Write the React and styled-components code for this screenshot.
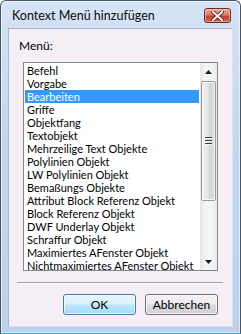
import React from 'react';
import styled, { createGlobalStyle } from 'styled-components';

const GlobalStyle = createGlobalStyle`
  html, body {
    margin: 0;
    padding: 0;
    background: #ffffff;
  }
  body {
    font-family: Lato, 'Noto Sans', sans-serif;
    font-size: 12px;
    color: #000;
  }
`;

const items = [
  'Befehl',
  'Vorgabe',
  'Bearbeiten',
  'Griffe',
  'Objektfang',
  'Textobjekt',
  'Mehrzeilige Text Objekte',
  'Polylinien Objekt',
  'LW Polylinien Objekt',
  'Bemaßungs Objekte',
  'Attribut Block Referenz Objekt',
  'Block Referenz Objekt',
  'DWF Underlay Objekt',
  'Schraffur Objekt',
  'Maximiertes AFenster Objekt',
  'Nichtmaximiertes AFenster Obiekt',
];

export default function App() {
  return (
    <>
      <GlobalStyle />
      <Window>
        <TitleBar>
          <Title>Kontext Menü hinzufügen</Title>
          <CloseButton aria-label="Schließen">
            <svg width="13" height="10" viewBox="0 0 13 10">
              <path
                d="M2 1 L11 9 M11 1 L2 9"
                stroke="#5a1c12"
                strokeWidth="3.6"
                strokeLinecap="square"
              />
              <path
                d="M2 1 L11 9 M11 1 L2 9"
                stroke="#ffffff"
                strokeWidth="2"
                strokeLinecap="square"
              />
            </svg>
          </CloseButton>
        </TitleBar>
        <Client>
          <Label>Menü:</Label>
          <ListBox>
            <Items>
              {items.map((item) => (
                <Item key={item} selected={item === 'Bearbeiten'}>
                  {item}
                </Item>
              ))}
            </Items>
            <ScrollBar>
              <ArrowButton>
                <svg width="7" height="4" viewBox="0 0 7 4">
                  <path d="M0 4 L3.5 0 L7 4 Z" fill="#1e1e1e" />
                </svg>
              </ArrowButton>
              <Track>
                <Thumb>
                  <Grip>
                    <span />
                    <span />
                    <span />
                  </Grip>
                </Thumb>
              </Track>
              <ArrowButton>
                <svg width="7" height="4" viewBox="0 0 7 4">
                  <path d="M0 0 L7 0 L3.5 4 Z" fill="#1e1e1e" />
                </svg>
              </ArrowButton>
            </ScrollBar>
          </ListBox>
          <Separator />
          <ButtonRow>
            <PushButton primary>OK</PushButton>
            <PushButton>Abbrechen</PushButton>
          </ButtonRow>
        </Client>
      </Window>
    </>
  );
}

const Window = styled.div`
  width: 241px;
  height: 334px;
  box-sizing: border-box;
  border: 1px solid #4a5566;
  border-bottom-color: #3aa0c8;
  border-radius: 6px 6px 0 0;
  background: linear-gradient(180deg, #d5e4f5 0%, #c3d7ef 40%, #bcd2ec 100%);
  box-shadow: inset 0 0 0 1px rgba(255, 255, 255, 0.55);
  padding: 0 7px 6px 7px;
  display: flex;
  flex-direction: column;
`;

const TitleBar = styled.div`
  height: 27px;
  display: flex;
  align-items: center;
  justify-content: space-between;
  padding: 0 2px 0 4px;
`;

const Title = styled.span`
  font-size: 12.5px;
  color: #0b0b0b;
  margin-top: 1px;
`;

const CloseButton = styled.div`
  width: 27px;
  height: 15px;
  box-sizing: border-box;
  border: 1px solid #6b2b22;
  border-radius: 3px;
  background: linear-gradient(180deg, #e7a99a 0%, #d9816a 45%, #c2432a 55%, #d0684d 100%);
  box-shadow: inset 0 0 0 1px rgba(255, 220, 210, 0.5);
  display: flex;
  align-items: center;
  justify-content: center;
  margin-top: 2px;
`;

const Client = styled.div`
  flex: 1;
  background: #f5eff5;
  border: 1px solid #a5b6cb;
  border-right-color: #d8e4f2;
  border-bottom-color: #d8e4f2;
  display: flex;
  flex-direction: column;
  padding: 0 9px 0 8px;
`;

const Label = styled.div`
  font-size: 12px;
  margin: 8px 0 0 2px;
  height: 17px;
  line-height: 17px;
`;

const ListBox = styled.div`
  margin: 8px 5px 0 6px;
  height: 209px;
  box-sizing: border-box;
  border: 1px solid #828790;
  background: #ffffff;
  display: flex;
  overflow: hidden;
`;

const Items = styled.div`
  flex: 1;
  padding: 1px 1px 0 1px;
  overflow: hidden;
`;

const Item = styled.div`
  height: 13px;
  line-height: 13px;
  padding-left: 2px;
  font-size: 11px;
  white-space: nowrap;
  overflow: hidden;
  color: ${(p) => (p.selected ? '#ffffff' : '#000000')};
  background: ${(p) => (p.selected ? '#3399ff' : 'transparent')};
`;

const ScrollBar = styled.div`
  width: 17px;
  display: flex;
  flex-direction: column;
  background: linear-gradient(90deg, #e6e6e6 0%, #f4f4f4 30%, #f4f4f4 70%, #e9e9e9 100%);
`;

const ArrowButton = styled.div`
  height: 17px;
  display: flex;
  align-items: center;
  justify-content: center;
`;

const Track = styled.div`
  flex: 1;
  padding: 1px 0 0 1px;
`;

const Thumb = styled.div`
  width: 15px;
  height: 120px;
  box-sizing: border-box;
  border: 1px solid #9a9a9a;
  border-radius: 2px;
  background: linear-gradient(90deg, #f2f2f2 0%, #e6e6e6 45%, #d6d6d6 55%, #dcdcdc 100%);
  box-shadow: inset 0 0 0 1px rgba(255, 255, 255, 0.7);
  display: flex;
  align-items: center;
  justify-content: center;
`;

const Grip = styled.div`
  display: flex;
  flex-direction: column;
  gap: 1px;

  span {
    display: block;
    width: 7px;
    height: 1px;
    background: #3c3c3c;
    border-bottom: 1px solid #f8f8f8;
  }
`;

const Separator = styled.div`
  height: 0;
  margin: 11px 0 0 0;
  border-top: 1px solid #a0a0a0;
  border-bottom: 1px solid #ffffff;
`;

const ButtonRow = styled.div`
  display: flex;
  justify-content: flex-end;
  gap: 9px;
  margin: 10px 5px 0 0;
`;

const PushButton = styled.div`
  width: 73px;
  height: 21px;
  box-sizing: border-box;
  border: 1px solid ${(p) => (p.primary ? '#3c7fb1' : '#707070')};
  border-radius: 3px;
  background: ${(p) =>
    p.primary
      ? 'linear-gradient(180deg, #eaf6fd 0%, #d9f0fc 48%, #bee6fd 52%, #a7d9f5 100%)'
      : 'linear-gradient(180deg, #f2f2f2 0%, #ebebeb 48%, #dddddd 52%, #cfcfcf 100%)'};
  box-shadow: inset 0 0 0 1px rgba(255, 255, 255, 0.7);
  display: flex;
  align-items: center;
  justify-content: center;
  font-size: 12px;
  color: #000;
`;
